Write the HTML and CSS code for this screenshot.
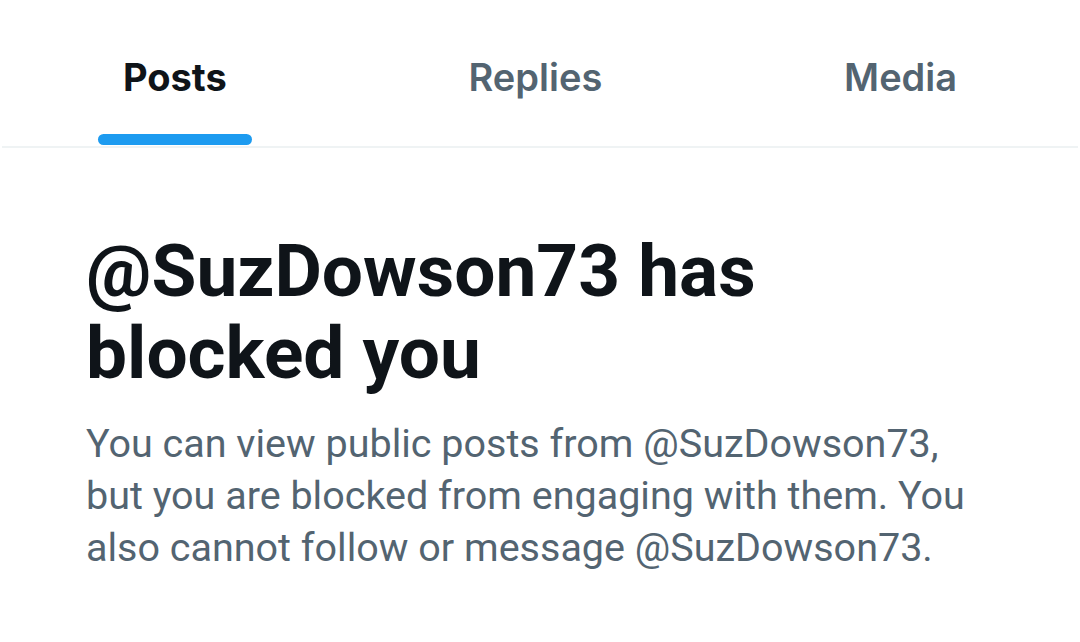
FILE: index.html
```html
<!DOCTYPE html>
<html lang="en">
<head>
<meta charset="utf-8">
<title>Blocked</title>
<link rel="stylesheet" href="styles.css">
</head>
<body>
<nav class="tabs">
  <div class="tab active"><div class="tab-inner"><span class="tab-label">Posts</span><span class="indicator"></span></div></div>
  <div class="tab"><div class="tab-inner"><span class="tab-label">Replies</span></div></div>
  <div class="tab"><div class="tab-inner"><span class="tab-label">Media</span></div></div>
</nav>
<main class="notice">
  <h1 class="title">@SuzDowson73 has blocked you</h1>
  <p class="desc">You can view public posts from @SuzDowson73, but you are blocked from engaging with them. You also cannot follow or message @SuzDowson73.</p>
</main>
</body>
</html>
```

FILE: styles.css
```css
html, body {
  margin: 0;
  padding: 0;
  background: #ffffff;
}
body {
  width: 1080px;
  height: 642px;
  overflow: hidden;
}
.tabs {
  display: flex;
  margin: 0 2px;
  border-bottom: 2px solid #eff3f4;
  height: 146px;
}
.tab {
  flex: 1 1 auto;
  display: flex;
  justify-content: center;
}
.tab-inner {
  display: flex;
  flex-direction: column;
  align-items: center;
  height: 100%;
}
.tab-label {
  font-family: Inter, "Noto Sans", sans-serif;
  font-weight: 600;
  font-size: 38px;
  line-height: 46px;
  color: #536471;
  padding-top: 54px;
}
.tab.active .tab-label {
  color: #0f1419;
  font-weight: 700;
}
.indicator {
  margin: auto -26px 1px;
  width: 154px;
  height: 11px;
  border-radius: 6px;
  background: #1d9bf0;
}
.notice {
  padding: 82px 40px 0 86px;
}
.title {
  margin: 0;
  font-family: Roboto, "Liberation Sans", sans-serif;
  font-weight: 700;
  font-size: 73px;
  line-height: 82px;
  color: #0f1419;
  max-width: 760px;
}
.desc {
  margin: 24px 0 0;
  font-family: Roboto, "Liberation Sans", sans-serif;
  font-weight: 400;
  font-size: 39.5px;
  line-height: 52px;
  color: #536471;
  max-width: 900px;
}
```
